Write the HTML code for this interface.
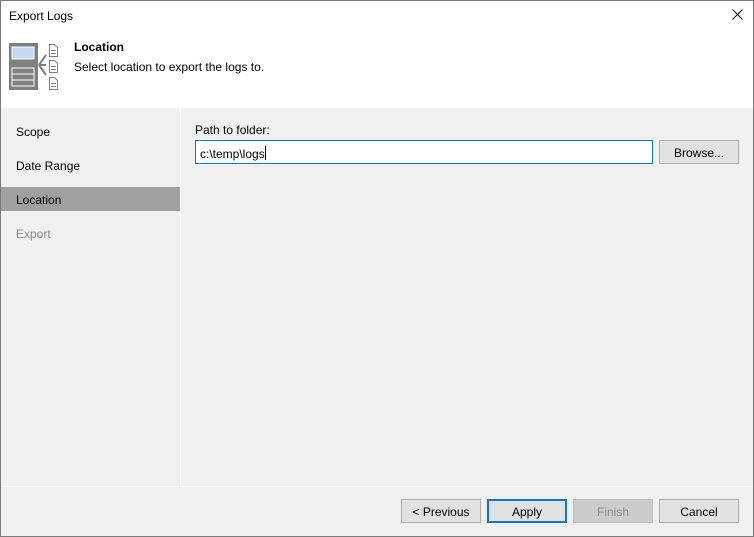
<!DOCTYPE html>
<html><head><style>
body{margin:0;width:754px;height:537px;overflow:hidden;font-family:"Liberation Sans",sans-serif;font-size:12px;color:#000;}
.win{position:absolute;left:0;top:0;width:752px;height:535px;border:1px solid #7a7a7a;background:#f0f0f0;}
.hdr{position:absolute;left:0;top:0;width:752px;height:107px;background:#fff;}
.t{position:absolute;white-space:nowrap;}
.btn{position:absolute;top:498px;height:22px;width:78px;border:1px solid #adadad;background:#e1e1e1;text-align:center;line-height:24px;}
</style></head><body>
<div class="win">
<div class="hdr">
<div class="t" style="left:8px;top:8px;">Export Logs</div>
<svg style="position:absolute;left:731px;top:8px" width="11" height="11"><path d="M0.5 0.5L10.5 10.5M10.5 0.5L0.5 10.5" stroke="#000" stroke-width="1"/></svg>
<svg style="position:absolute;left:7px;top:40px" width="54" height="50">
<rect x="1" y="2" width="29" height="47" fill="#7f7f7f"/>
<rect x="4" y="6" width="22" height="12" fill="#c5d9ef" stroke="#fff"/>
<rect x="4" y="27" width="22" height="18" fill="none" stroke="#fff"/>
<line x1="4" y1="33" x2="26" y2="33" stroke="#fff"/><line x1="4" y1="39" x2="26" y2="39" stroke="#fff"/>
<path d="M31 24 L38 14 M31 24 L38 24 M31 24 L38 34" stroke="#7f7f7f" stroke-width="2" fill="none"/>
<g fill="#fff" stroke="#7f7f7f">
<path d="M41.5 3.5h5l3 3v9h-8z"/><path d="M41.5 19.5h5l3 3v9h-8z"/><path d="M41.5 36.5h5l3 3v9h-8z"/></g>
<g stroke="#7f7f7f"><line x1="43" y1="9.5" x2="48" y2="9.5"/><line x1="43" y1="12.5" x2="48" y2="12.5"/><line x1="43" y1="25.5" x2="48" y2="25.5"/><line x1="43" y1="28.5" x2="48" y2="28.5"/><line x1="43" y1="42.5" x2="48" y2="42.5"/><line x1="43" y1="45.5" x2="48" y2="45.5"/></g>
</svg>
<div class="t" style="left:73px;top:39px;font-weight:bold;">Location</div>
<div class="t" style="left:73px;top:59px;">Select location to export the logs to.</div>
</div>
<div style="position:absolute;left:179px;top:107px;width:1px;height:378px;background:#fff;"></div>
<div style="position:absolute;left:0;top:485px;width:752px;height:1px;background:#fff;"></div>
<div class="t" style="left:15px;top:124px;">Scope</div>
<div class="t" style="left:15px;top:158px;">Date Range</div>
<div style="position:absolute;left:0;top:186px;width:179px;height:24px;background:#a0a0a0;"></div>
<div class="t" style="left:15px;top:192px;">Location</div>
<div class="t" style="left:15px;top:226px;color:#8a8a8a;">Export</div>
<div class="t" style="left:194px;top:122px;">Path to folder:</div>
<div style="position:absolute;left:194px;top:139px;width:456px;height:22px;border:1px solid #0a78c8;background:#fff;"></div>
<div class="t" style="left:199px;top:145px;">c:\temp\logs<span style="display:inline-block;width:1px;height:14px;background:#000;vertical-align:-2px;"></span></div>
<div class="btn" style="left:658px;top:139px;">Browse...</div>
<div class="btn" style="left:400px;">&lt; Previous</div>
<div class="btn" style="left:486px;border:2px solid #0a78c8;width:76px;height:20px;line-height:22px;">Apply</div>
<div class="btn" style="left:572px;background:#cccccc;border-color:#bfbfbf;color:#8a8a8a;">Finish</div>
<div class="btn" style="left:658px;">Cancel</div>
</div>
</body></html>
